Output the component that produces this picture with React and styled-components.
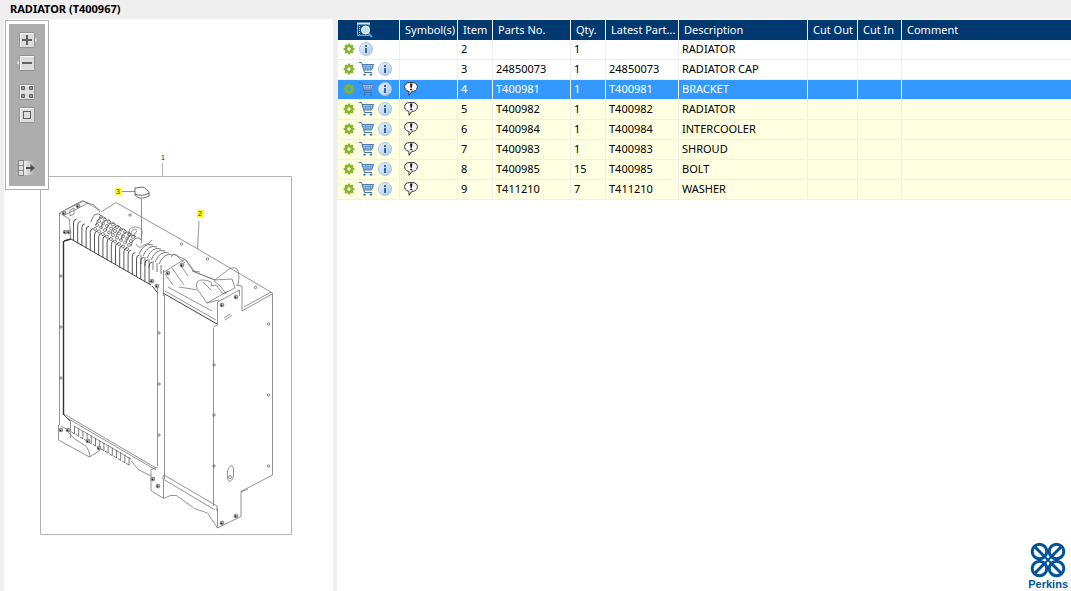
import React, {useState} from 'react';
import styled, {createGlobalStyle} from "styled-components";

const columns = ['Symbol(s)', 'Item', 'Parts No.', 'Qty.', 'Latest Part...', 'Description', 'Cut Out', 'Cut In', 'Comment']
const widths = [62, 58, 35, 78, 35, 73, 129, 50, 44]

const parts = [
    {item: 2, number: '', qty: 1, description: 'RADIATOR'},
    {item: 3, number: '24850073', qty: 1, description: 'RADIATOR CAP', cart: true},
    {item: 4, number: 'T400981', qty: 1, description: 'BRACKET', cart: true, note: true},
    {item: 5, number: 'T400982', qty: 1, description: 'RADIATOR', cart: true, note: true},
    {item: 6, number: 'T400984', qty: 1, description: 'INTERCOOLER', cart: true, note: true},
    {item: 7, number: 'T400983', qty: 1, description: 'SHROUD', cart: true, note: true},
    {item: 8, number: 'T400985', qty: 15, description: 'BOLT', cart: true, note: true},
    {item: 9, number: 'T411210', qty: 7, description: 'WASHER', cart: true, note: true},
]

const bolts = [
    [64, 213], [78, 206], [65, 232], [69, 232], [168, 273], [182, 265], [222, 305], [236, 297], [61, 430],
    [68, 430], [88, 441], [99, 448], [153, 479], [158, 486], [222, 523], [236, 516], [152, 281], [157, 286],
]

const holes = [
    [130, 215], [181.5, 244], [207.5, 259], [255.5, 287.5], [268.5, 324], [268.5, 395], [268.5, 466], [61, 276],
    [61, 327], [61, 378], [159, 333], [159, 384], [159, 435], [214, 365], [214, 415], [214, 466],
]

const range = (n) => Array.from({length: n}, (_, i) => i)

const Plate = () => (
    <>
        <rect x="2.5" y="1.5" width="15" height="15" rx="1" fill="#dcdcdc" stroke="#929292"/>
        <path d="M3.5 15.5v-13h13" fill="none" stroke="#f8f8f8"/>
    </>
)

const ZoomInIcon = () => (
    <svg width="20" height="18">
        <path d="M17 6l3 3-3 3z" fill="#eee"/>
        <Plate/>
        <path d="M5 9h10M10 4v10" stroke="#606060" strokeWidth="2"/>
    </svg>
)

const ZoomOutIcon = () => (
    <svg width="20" height="18">
        <path d="M3 6L0 9l3 3z" fill="#eee"/>
        <Plate/>
        <path d="M5 9h10" stroke="#606060" strokeWidth="2"/>
    </svg>
)

const TilesIcon = () => (
    <svg width="20" height="18">
        <Plate/>
        <path d="M4.5 3.5h3v3h-3zM12.5 3.500h3v3h-3zM4.500 11.500h3v3h-3zM12.500 11.500h3v3h-3z" fill="#999" stroke="#606060"/>
    </svg>
)

const FitIcon = () => (
    <svg width="20" height="18">
        <Plate/>
        <rect x="6.500" y="5.500" width="7" height="7" fill="none" stroke="#606060"/>
    </svg>
)

const ExportIcon = () => (
    <svg width="20" height="18">
        <defs>
            <linearGradient id="fade">
                <stop offset="0" stopColor="#f2f2f2"/>
                <stop offset="1" stopColor="#adadad"/>
            </linearGradient>
        </defs>
        <rect x="6" y="2" width="12" height="14" fill="url(#fade)"/>
        <path d="M2 2h4v4H2zM2 7h4v4H2zM2 12h4v4H2z" fill="#ddd"/>
        <path d="M6.500 1v16M1 1.500h6M1 6.500h5M1 11.500h5M1 16.500h6M1.500 1v16" stroke="#858585" fill="none"/>
        <path d="M9 9h7" stroke="#505050" strokeWidth="2"/>
        <path d="M13.500 5l4.500 4-4.500 4z" fill="#505050"/>
    </svg>
)

const GearIcon = () => (
    <svg width="12" height="12" viewBox="-6 -6 12 12">
        {range(8).map(i => (
            <rect key={i} x="-1.2" y="-5.4" width="2.4" height="3" fill="#84b52c" transform={`rotate(${i * 45})`}/>
        ))}
        <circle r="2.900" fill="none" stroke="#84b52c" strokeWidth="2.300"/>
    </svg>
)

const CartIcon = () => (
    <svg width="15" height="14" viewBox="0 0 15 14">
        <path d="M3 2h12l-2 6H5z" fill="#b4cdea"/>
        <path d="M0 .500h2.500l3 10H13M3 2.500h11.500l-2 5.500H5" fill="none" stroke="#4277b3"/>
        <path d="M3.800 4.500h10M4.500 6.300h8.500M6.500 2v6M9 2v6M11.500 2v6" fill="none" stroke="#5b8cc4" strokeWidth=".7"/>
        <circle cx="5.500" cy="12.600" r="1.200" fill="#4277b3"/>
        <circle cx="12" cy="12.600" r="1.200" fill="#4277b3"/>
    </svg>
)

const InfoIcon = () => (
    <svg width="14" height="14" viewBox="0 0 14 14">
        <defs>
            <linearGradient id="glass" x2="1" y2="1">
                <stop offset="0" stopColor="#eef5fb"/>
                <stop offset="1" stopColor="#a4c5e4"/>
            </linearGradient>
        </defs>
        <circle cx="7" cy="7" r="6.500" fill="url(#glass)" stroke="#a9c5de"/>
        <path d="M6 3h2v2H6zM6 6h2v5H6z" fill="#3767a3"/>
    </svg>
)

const NoteIcon = () => (
    <svg width="15" height="14" viewBox="-1 0 15 14">
        <path d="M4.500 9.300C-1 8-.5.700 5 .600h4c5.500.1 6 7.400.5 8.700H8l-3 4V9.300z" fill="#fff" stroke="#333"/>
        <path d="M6 1.500h2.400l-.5 4.300H6.500zM6.200 6.800h2v1.500h-2z" fill="#111"/>
    </svg>
)

const SearchListIcon = () => (
    <svg width="16" height="16" viewBox="0 0 16 16">
        <path d="M.5 1.500h11.500v12H.5z" fill="#0d4a80" stroke="#6fb0dc"/>
        <path d="M0 1.500h13" stroke="#d5ebf8" strokeWidth="2"/>
        <path d="M2.500 4v9" stroke="#cfe6f5" strokeDasharray="1 1"/>
        <path d="M11 11l4 4" stroke="#4ba0d8" strokeWidth="2"/>
        <circle cx="8.500" cy="8" r="4" fill="#c3dcec" stroke="#fff"/>
    </svg>
)

const Bolt = ({x, y}) => (
    <g transform={`translate(${x} ${y})`}>
        <circle r="1.900" fill="#bbb" stroke="#555" strokeWidth=".6"/>
        <circle cx="-.5" cy=".3" r=".9" fill="#222"/>
    </g>
)

const Radiator = () => (
    <Drawing viewBox="4 19 329 572" role="img" aria-label="Radiator assembly">
        <path d="M40.500 176.500h251v358h-251zM162.500 163v13" stroke="#b4b4b4"/>
        <g stroke="#777" strokeWidth=".8">
            {/* back plate and outer shell */}
            <path d="M101 212l15-9.500 81 46 75.500 44.500M272.500 293v182L241 491.500v25L217.500 528l-10-15-13-4.500-18-13-6 0-7 3-12.500-8v-20"/>
            <path d="M272 294l-30 17v-25l-6-1M271 292l-27 15M59.500 213v212M59.500 213l23-12.500 18 10M65 210l17-8M63 216l25-13"/>
            <path d="M59.500 213l10 6 1 20M82 201l12 4 6 7M74 208v6l-4 2v-6z"/>
            {/* front panels */}
            <path d="M157.500 288v178M163.500 270v26M164.500 295v184M213.500 328v178M217.500 508v20M217.500 302v23l-4 2"/>
            <path d="M168 287l44 24M217.500 302l22-12v6M64 414l92 54M67 418l89 52"/>
            <path d="M164 475l53 31M163 479l52 31M164 475q-2 2-1 4M217 506v5M150.500 470l7-3M163.500 480v18"/>
            {/* left foot */}
            <path d="M58.500 425v15l31 17 11-7M61 426q6 2 8 7 5 7 12 10 8 3 9 14M131 461l8 9 12 6M70.500 421v17"/>
            {/* hoses and bracket */}
            <path d="M164 272l21-13 10 13 20 8 14-11q10-5 10 8l-1 8M171 257q4-6 8 1l6 5M173 254l13 6 7 11 7 1M172 268l12 17M180 264l8 12M165 274l8 11"/>
            <path d="M179 287l19 3 9 13 12-3M197 289q-3-10 7-9t7 6l5-1 7 9 12-6-3-9-18 1M203 282l8 8M214 281q8 5 12 13M192 271l23 9M207 303l21-12"/>
            <path d="M227.500 479v-8q3.500-9 6-3v8q-3 9-6 3zM225 320l7-5M224 318l6-4M241 492l7-3"/>
            <circle cx="230" cy="477" r="1.500"/>
            <path d="M197.500 249l1.500-28M141.500 199v44M121 191.500h14"/>
            <path d="M135 188l8-1q4 2 6 5v4l-5 2h-5l-4-3zM135 194q7 3 14-1" stroke="#444"/>
            <path d="M136 244q3 6 8 1 6-1 8-5M129 237q-2-11 7-10t5 9M131 235q0-7 6-5M133 236l4-5"/>
        </g>
        <path d="M71 239l80 46M152 286l5 6M163 293l54 31M64 415l6 6" stroke="#444"/>
        <path d="M165 291l51 29" stroke="#666" strokeWidth=".7"/>
        <path d="M63.500 241v174M64 241l7-2" stroke="#333" strokeWidth="1.4"/>
        {/* cooling fins */}
        <g stroke="#444" strokeWidth=".9">
            {range(19).map(i => (
                <path key={i} d={`M${73.5 + i * 4.2} ${241 + i * 2.4}v-18q0-4 3-4`}/>
            ))}
            {range(9).map(i => (
                <path key={i} d={`M${91 + i * 5} ${222 + i * 3}q2-9 8-8l2 2`} strokeWidth=".7"/>
            ))}
            {range(6).map(i => (
                <path key={i} d={`M${139 + i * 4} ${254 + i * 2}q5-12 14-9M${141 + i * 4} ${255 + i * 2}v9`} strokeWidth=".7"/>
            ))}
            {range(14).map(i => (
                <path key={i} d={`M${74.5 + i * 4.2} ${426 + i * 2.4}v8l-3-2`} strokeWidth=".7"/>
            ))}
            <path d="M74 426l57 33" strokeWidth=".6"/>
        </g>
        <g stroke="#555" strokeWidth=".7">
            {range(9).map(i => range(4).map(j => (
                <circle key={`${i}-${j}`} cx={101 + i * 4 - j * 2} cy={217 + i * 2.5 + j * 4} r="1.500"/>
            )))}
            {holes.map(([x, y]) => <circle key={`${x}-${y}`} cx={x} cy={y} r="1.200"/>)}
        </g>
        {bolts.map(([x, y]) => <Bolt key={`${x}-${y}`} x={x} y={y}/>)}
        <path d="M115 188h7v7h-7zM197 210h7v8h-7z" fill="#ff0"/>
        <text x="161" y="160">1</text>
        <text x="198" y="216">2</text>
        <text x="116" y="194">3</text>
    </Drawing>
)

const Logo = () => (
    <LogoBox>
        <svg width="36" height="36" viewBox="0 0 36 36" fill="none" stroke="#00539b" strokeWidth="3">
            <circle cx="9.500" cy="9.500" r="7.300"/>
            <circle cx="26.500" cy="9.500" r="7.300"/>
            <circle cx="9.500" cy="26.500" r="7.300"/>
            <circle cx="26.500" cy="26.500" r="7.300"/>
            <path d="M5 5l9 9M31 5l-9 9M5 31l9-9M31 31l-9-9"/>
            <path d="M14 14l8 8M22 14l-8 8" strokeWidth="2"/>
        </svg>
        <span>Perkins</span>
    </LogoBox>
)

const App = () => {
    const [selected, setSelected] = useState(4)

    return (
        <>
            <GlobalStyle/>
            <Page>
                <Title>RADIATOR (T400967)</Title>
                <Panes>
                    <DrawingPane>
                        <Toolbar>
                            <ToolButton aria-label="Zoom in"><ZoomInIcon/></ToolButton>
                            <ToolButton aria-label="Zoom out"><ZoomOutIcon/></ToolButton>
                            <ToolButton $gap={11} aria-label="Tiles"><TilesIcon/></ToolButton>
                            <ToolButton aria-label="Fit to window"><FitIcon/></ToolButton>
                            <ToolButton $gap={35} aria-label="Hide list"><ExportIcon/></ToolButton>
                        </Toolbar>
                        <Radiator/>
                    </DrawingPane>
                    <ListPane>
                        <Table>
                            <colgroup>
                                {widths.map((width, i) => <Col key={i} $width={width}/>)}
                                <col/>
                            </colgroup>
                            <thead>
                            <tr>
                                <HeadCell><IconButton aria-label="Search list"><SearchListIcon/></IconButton></HeadCell>
                                {columns.map(name => <HeadCell key={name}>{name}</HeadCell>)}
                            </tr>
                            </thead>
                            <tbody>
                            {parts.map(part => (
                                <Row
                                    key={part.item}
                                    $marked={part.note}
                                    $selected={part.item === selected}
                                    onClick={() => setSelected(part.item)}
                                >
                                    <Cell>
                                        <Actions>
                                            <IconButton aria-label="Options"><GearIcon/></IconButton>
                                            {part.cart && <IconButton aria-label="Add to cart"><CartIcon/></IconButton>}
                                            <IconButton aria-label="Information"><InfoIcon/></IconButton>
                                        </Actions>
                                    </Cell>
                                    <Cell>{part.note && <NoteIcon/>}</Cell>
                                    <Cell>{part.item}</Cell>
                                    <Cell>{part.number}</Cell>
                                    <Cell>{part.qty}</Cell>
                                    <Cell>{part.number}</Cell>
                                    <Cell>{part.description}</Cell>
                                    <Cell/>
                                    <Cell/>
                                    <Cell/>
                                </Row>
                            ))}
                            </tbody>
                        </Table>
                        <Logo/>
                    </ListPane>
                </Panes>
            </Page>
        </>
    );
};

const GlobalStyle = createGlobalStyle`
  * {
    box-sizing: border-box;
  }

  body {
    margin: 0;
    background: #efefef;
    color: #000;
    font-family: "Noto Sans", "Open Sans", sans-serif;
    font-size: 11px;
  }

  button {
    padding: 0;
    border: 0;
    background: none;
    cursor: pointer;
  }

  svg {
    display: block;
  }
`

const Page = styled.div`
  min-height: 100vh;
  display: flex;
  flex-direction: column;
`

const Title = styled.h1`
  margin: 0;
  padding: 0 10px 2px;
  font-size: 11px;
  line-height: 17px;
`

const Panes = styled.main`
  flex: 1;
  display: grid;
  grid-template-columns: minmax(200px, 329px) minmax(0, 1fr);
  gap: 4px;
  padding-left: 4px;
`

const DrawingPane = styled.section`
  position: relative;
  background: #fff;
`

const Toolbar = styled.div`
  position: absolute;
  top: 1px;
  left: 1px;
  width: 44px;
  height: 170px;
  padding: 5px 8px;
  border: 1px solid #adadad;
  background: #adadad;
  box-shadow: inset 0 0 0 3px #fff;
`

const ToolButton = styled.button`
  display: block;
  margin: ${({$gap}) => $gap || 5}px auto 0;
`

const Drawing = styled.svg`
  width: 100%;
  height: auto;
  fill: none;

  text {
    fill: #222;
    font-family: "Liberation Sans", sans-serif;
    font-size: 7px;
  }
`

const ListPane = styled.section`
  display: flex;
  flex-direction: column;
  justify-content: space-between;
  background: #fff;
  padding-top: 1px;
`

const Table = styled.table`
  width: 100%;
  table-layout: fixed;
  border-collapse: separate;
  border-spacing: 0;
  border-left: 1px solid #efefef;
`

const Col = styled.col`
  width: ${({$width}) => $width}px;
`

const HeadCell = styled.th`
  height: 20px;
  padding: 0 0 1px 5px;
  border-right: 1px solid #efefef;
  background: #003870;
  color: #fff;
  font-weight: 400;
  text-align: left;
  white-space: nowrap;

  > button {
    margin-left: 14px;
  }

  &:last-child {
    border-right: 0;
  }
`

const Cell = styled.td`
  height: 20px;
  padding: 0 3px 2px;
  border-right: 1px solid #efefef;
  border-bottom: 1px solid #efefef;
  line-height: 15px;
  white-space: nowrap;

  &:last-child {
    border-right: 0;
  }
`

const Row = styled.tr`
  background: ${({$selected, $marked}) => $selected ? '#3399ff' : $marked ? '#ffffe1' : '#fff'};
  color: ${({$selected}) => $selected ? '#fff' : '#000'};
`

const Actions = styled.div`
  display: flex;
  align-items: center;
  gap: 4px;
  padding-left: 2px;
`

const IconButton = styled.button`
  display: block;
`

const LogoBox = styled.div`
  align-self: flex-end;
  display: flex;
  flex-direction: column;
  align-items: center;
  padding: 0 3px 1px 0;
  color: #00539b;
  font-family: "Liberation Sans", sans-serif;
  font-size: 11px;
  font-weight: 700;
  line-height: 12px;
`

export default App;
